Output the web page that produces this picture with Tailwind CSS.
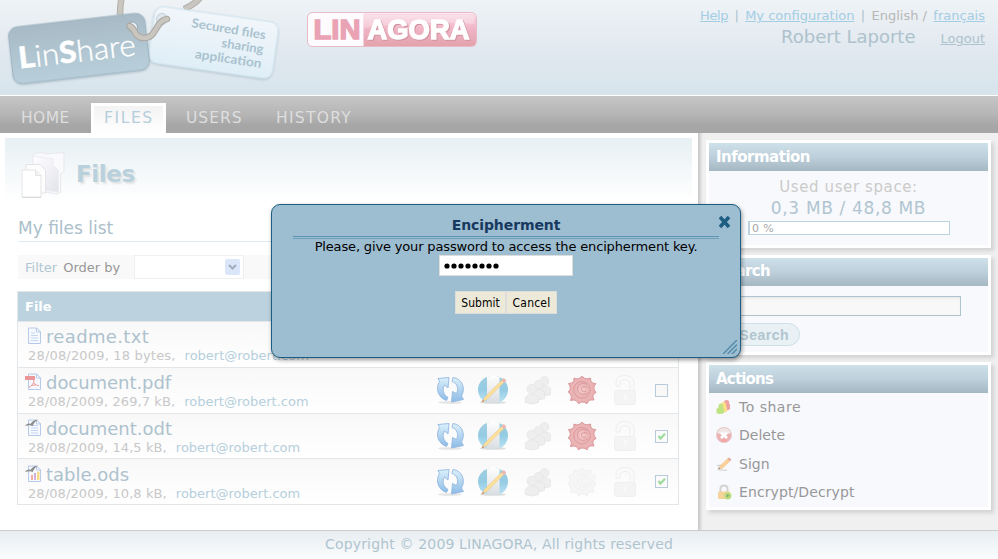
<!DOCTYPE html>
<html lang="en">
<head>
<meta charset="utf-8">
<title>LinShare</title>
<script src="https://cdn.jsdelivr.net/npm/@tailwindcss/browser@4"></script>
</head>
<body class="w-[998px] h-[559px] overflow-hidden bg-white font-['Verdana','DejaVu_Sans',sans-serif] text-[13px] whitespace-nowrap">
<svg width="0" height="0" class="absolute">
  <defs>
    <linearGradient id="gBlue" x1="0" y1="0" x2="0" y2="1"><stop offset="0" stop-color="#dcf1fb"/><stop offset="1" stop-color="#8dbbe6"/></linearGradient>
    <linearGradient id="gGlobe" x1="0" y1="0" x2="0" y2="1"><stop offset="0" stop-color="#a5cfe0"/><stop offset=".5" stop-color="#93cbe3"/><stop offset="1" stop-color="#b9e2f2"/></linearGradient>
    <linearGradient id="gBand" x1="0" y1="0" x2="0" y2="1"><stop offset="0" stop-color="#fdfdfd"/><stop offset="1" stop-color="#dcdfe2"/></linearGradient>
    <radialGradient id="gSeal"><stop offset="0" stop-color="#f6cdcd"/><stop offset="1" stop-color="#e6acae"/></radialGradient>
    <symbol id="refresh" viewBox="0 0 30 30">
      <ellipse cx="15" cy="27.500" rx="12" ry="1.300" fill="#e4e4e4"/>
      <path d="M11.500 25.500C3.500 23 0 14 4.500 6.500L3 3.500L14 2.500L13 13L9.500 10C7 14 8 19.500 13 22.500Z" fill="url(#gBlue)" stroke="#94b8e0" stroke-width=".9"/>
      <path d="M18 2.500C27 3.500 31 13 26.500 21L28.500 24.500L16.500 27L17.500 16.500L21.500 18.500C24 13 22 8 17 6.500Z" fill="url(#gBlue)" stroke="#94b8e0" stroke-width=".9"/>
    </symbol>
    <symbol id="globe" viewBox="0 0 32 30">
      <ellipse cx="16" cy="27.500" rx="13" ry="1.300" fill="#ddd"/>
      <path d="M16 1C7 1 1 7 1 14.500C1 20 4 25 9 27.200L23 27.200C28 25 31 20 31 14.500C31 7 25 1 16 1Z" fill="url(#gGlobe)"/>
      <path d="M10 2Q16 -.5 22.500 2.300V27H10Z" fill="url(#gBand)"/>
      <path d="M5.500 26.500L7.500 22.500L26.500 3.800L28.500 5.800L9.500 24.800Z" fill="#fde09a" stroke="#e8c389" stroke-width=".6"/>
      <path d="M24.500 5.500L27 8L29 6Q28.500 3 26.500 3.200Z" fill="#eab7b3"/>
      <path d="M4 27.500L6 24.700L7.500 26.200Z" fill="#c98f70"/>
    </symbol>
    <symbol id="people" viewBox="0 0 28 30">
      <g fill="#eeeeee" stroke="#e4e4e4" stroke-width=".7">
        <path d="M15 13.500Q20 8.500 26.500 13V19.500Q20 22.500 15 19.500Z"/><circle cx="20.500" cy="6" r="4.400"/>
        <path d="M9 17.500Q14 12 20.500 17V23.500Q14 26.500 9 23.500Z"/><circle cx="14.500" cy="9.800" r="4.400"/>
        <path d="M1.300 22Q8 15.500 14.500 22V27.500Q8 30.500 1.300 27.500Z"/><circle cx="7.700" cy="14" r="4.700"/>
      </g>
    </symbol>
    <symbol id="sealshape" viewBox="0 0 30 30">
      <path d="M15 1.200Q17 3.500 19 3.800Q21 4 23.500 3Q23.500 6 24.500 7.300Q26 8.500 28.800 8.500Q26.800 11 26.800 13Q27 15 29 17.500Q26.500 18.500 26 20.500Q25.800 22.500 27 25Q24 24.500 22.300 25.500Q21 26.500 20 28.800Q18 27 15.500 27Q13.500 27 11.500 28.800Q10.500 26.500 9 25.500Q7 24.500 3.500 25.500Q4.800 22.500 4 20.500Q3.500 18.500 1.200 17Q3.300 15 3.300 13Q3.200 11 1.500 8.500Q4.500 8.500 6 7.300Q7 6 7 3Q9 4.200 11 3.800Q13 3.500 15 1.200Z" stroke-linejoin="round" stroke-width="1"/>
      <circle cx="15" cy="14.800" r="8.500" stroke-width=".9"/>
      <path d="M20 9.500C15 6.500 10 10 10.500 14.500C11 19.500 17 21 21 17.500M20.500 12.500C17 10.500 14 12 14.500 14.800C15 16.800 17.500 17 19 16" fill="none" stroke-width="1"/>
    </symbol>
    <symbol id="lock" viewBox="0 0 24 32">
      <path d="M3 12V8.500C3 4.500 6.500 1.500 12 1.500C17.500 1.500 21 4.500 21 9V16.500H17V9.500C17 7 15 5.500 12 5.500C9 5.500 7 7 7 9V12Z" fill="#fafafa" stroke="#eeeeee"/>
      <rect x="1.500" y="16.500" width="21" height="14" rx="2" fill="#f4f4f4" stroke="#f0f0f0"/>
      <path d="M12 20a1.800 1.800 0 0 1 1 3.300v3h-2v-3a1.800 1.800 0 0 1 1-3.300" fill="#f8f8f8"/>
    </symbol>
    <symbol id="page" viewBox="0 0 17 18">
      <path d="M3.500 1H11.500L15.500 5V16.500H3.500Z" fill="#f5f9ff" stroke="#b7cae9"/>
      <path d="M11.500 1V5H15.500Z" fill="#fff" stroke="#b7cae9"/>
    </symbol>
    <symbol id="gull" viewBox="0 0 17 18">
      <path d="M0 7C2 4.500 4 4 5.500 5C7 2.500 9 .8 13 .5C10 2.500 8.800 4 7.800 7C5.500 6 3 6.200 0 7Z" fill="#8d8d8d"/>
    </symbol>
  </defs>
</svg>

<div class="flex flex-col h-[559px]">
  <header class="relative h-24 shrink-0 flex justify-between border-b border-white bg-linear-to-b from-[#eff3f6] via-[#e2e9f0] to-[#d7e4ec]">
    <svg width="490" height="95" viewBox="0 0 490 95">
      <defs>
        <linearGradient id="tag1" x1="0" y1="0" x2="0" y2="1"><stop offset="0" stop-color="#a7bac5"/><stop offset="1" stop-color="#b8cfdb"/></linearGradient>
        <linearGradient id="tag2" x1="0" y1="0" x2="0" y2="1"><stop offset="0" stop-color="#f1f6fa"/><stop offset="1" stop-color="#dfeef7"/></linearGradient>
        <linearGradient id="pink" x1="0" y1="0" x2="0" y2="1"><stop offset="0" stop-color="#f9d9e5"/><stop offset=".5" stop-color="#efb3c4"/><stop offset="1" stop-color="#e3a3ad"/></linearGradient>
        <filter id="sh" x="-10%" y="-20%" width="120%" height="150%"><feDropShadow dx="0" dy="1" stdDeviation="1.200" flood-color="#6f8796" flood-opacity=".4"/></filter>
      </defs>
      <path d="M120 15Q120 6 121.500 -2M184 9Q194 5 200 -2" fill="none" stroke="#b3afaa" stroke-width="6.500"/>
      <path d="M120 15Q120 6 121.500 -2M184 9Q194 5 200 -2" fill="none" stroke="#c9c5bf" stroke-width="4.500"/>
      <g transform="rotate(8 213.500 42.500)" filter="url(#sh)"><rect x="151" y="14" width="125" height="57" rx="9" fill="url(#tag2)" stroke="#cfe4ef"/></g>
      <g transform="rotate(-6.500 79 48.500)" filter="url(#sh)"><rect x="10.500" y="20" width="137" height="57" rx="9" fill="url(#tag1)" stroke="#9eb5c2"/></g>
      <circle cx="132.500" cy="27" r="5" fill="#e6edf1" stroke="#93a8b4"/>
      <circle cx="162" cy="19" r="5.500" fill="#dfe7ec" stroke="#c2d3dd"/>
      <path d="M129.500 26C136 29 134 38 144 38C157 38 155 21 167 19" fill="none" stroke="#aaa6a1" stroke-width="6.500" stroke-linecap="round"/>
      <path d="M129.500 26C136 29 134 38 144 38C157 38 155 21 167 19" fill="none" stroke="#c9c5bf" stroke-width="4.500" stroke-linecap="round"/>
      <g transform="translate(19.500 68.500) rotate(-6.500)" fill="#fff" font-family="Lato, sans-serif" font-size="30" font-weight="300">
        <text textLength="118" lengthAdjust="spacingAndGlyphs" stroke="#fff" stroke-width=".35"><tspan font-weight="900">L</tspan>in<tspan font-weight="900">S</tspan>hare</text>
      </g>
      <g fill="#a9c2cf" font-family="Lato, sans-serif" font-weight="700" font-size="12.500">
        <text transform="translate(191 27) rotate(9.500)" textLength="75" lengthAdjust="spacingAndGlyphs">Secured files</text>
        <text transform="translate(221 47) rotate(9)" textLength="42.500" lengthAdjust="spacingAndGlyphs">sharing</text>
        <text transform="translate(194.500 58) rotate(8.500)" textLength="67" lengthAdjust="spacingAndGlyphs">application</text>
      </g>
      <rect x="307.500" y="12.500" width="169" height="34" rx="5" fill="#fdfbfd" stroke="#e6bac6"/>
      <path d="M363.500 13.500H471.500Q476 13.500 476 18V41.500Q476 46 471.500 46H363.500Z" fill="url(#pink)"/>
      <path d="M364 15H470Q474 15 474 19V24Q420 20 364 28Z" fill="#fff" fill-opacity=".25"/>
      <g font-family="'Liberation Sans', sans-serif" font-weight="700" font-size="28" stroke-width="1.400">
        <text x="313.500" y="39" textLength="47" lengthAdjust="spacingAndGlyphs" fill="#eaa3b5" stroke="#eaa3b5">LIN</text>
        <text x="367.500" y="39" textLength="102" lengthAdjust="spacingAndGlyphs" fill="#fff" stroke="#fff" class="[filter:drop-shadow(1px_1px_0.5px_#cf93a0)]">AGORA</text>
      </g>
    </svg>
    <div class="w-[300px] pr-[13px] pt-2 text-[#adc2cc]">
      <div class="flex justify-between h-4 leading-4 ml-[2px]">
        <a class="text-[#a3cde4] underline tracking-[-0.4px]">Help</a><span>|</span><a class="text-[#a3cde4] underline">My configuration</a><span>|</span><span class="text-[#b7b7b7]">English&nbsp;/</span><a class="text-[#a3cde4] underline">français</a>
      </div>
      <div class="flex justify-end gap-[25px] h-[26px] leading-[26px]"><span class="text-[18px]">Robert Laporte</span><a class="underline leading-[29px]">Logout</a></div>
    </div>
  </header>

  <nav class="h-[37px] shrink-0 flex items-end text-[15.5px] text-[#dedede] bg-linear-to-b from-[#c6c6c6] from-0% via-[#b5b5b5] via-50% to-[#a6a6a6] to-80%">
    <a class="w-[91px] pl-[21px] h-[30px] leading-[30px] tracking-[0.4px]">HOME</a>
    <a class="w-[75px] h-[30px] pl-[10px] leading-6 border-[3px] border-b-0 border-white bg-linear-to-b from-[#f3f3f3] to-white text-[#b5cedb] tracking-[1.6px]">FILES</a>
    <a class="pl-5 w-[110px] h-[30px] leading-[30px] tracking-[1px]">USERS</a>
    <a class="h-[30px] leading-[30px] tracking-[1.3px]">HISTORY</a>
  </nav>

  <div class="h-[397px] shrink-0 flex">
    <main class="w-[698px] bg-white pt-[5px] pl-[5px]">
      <div class="w-[687px] h-[70px] flex bg-linear-to-b from-[#e7f0f3] to-white to-90%">
        <svg width="46" height="50" viewBox="0 0 46 50" class="ml-[15px] mt-[12px]">
          <defs><linearGradient id="fold" x1="0" y1="0" x2="1" y2="1"><stop offset="0" stop-color="#fff"/><stop offset=".5" stop-color="#f1f1f7"/><stop offset="1" stop-color="#e2e2ea"/></linearGradient></defs>
          <path d="M13 3.500L23 2.500L25 4L44 2.500V21L40.500 24V42.500L37 44L13 40Z" fill="#fafafc" stroke="#e8e8ee"/>
          <path d="M13 6L33 9V16L38.500 20V42L13 39Z" fill="url(#fold)" stroke="#ececf2"/>
          <path d="M6 14.500H20L25.500 20V43H6Z" fill="#fdfdfd" stroke="#e4e4e7"/>
          <path d="M2 20H15.500L21 25.500V47H2Z" fill="#fff" stroke="#e4e4e7"/><path d="M15.500 20V25.500H21" fill="#f3f3f5" stroke="#e4e4e7"/><path d="M2 47.500H21" stroke="#d9d9db"/>
        </svg>
        <h1 class="ml-[10px] mt-[20px] h-8 leading-8 text-[23px] tracking-[-0.4px] font-bold text-[#b9d1dd] [text-shadow:2px_2px_2px_#e2e2e2]">Files</h1>
      </div>
      <div class="ml-[13px] w-[661px]">
        <h2 class="mt-[8px] h-[26px] leading-[24px] text-[17px] text-[#abc0cb] border-b border-[#dcebf2]">My files list</h2>
        <div class="mt-[13px] h-6 flex items-center bg-[#f9f9f9] pl-[7px]">
          <span class="text-[#b0c7d3] pt-px">Filter</span><span class="ml-[6px] pt-px text-[#979797]">Order by</span>
          <div class="ml-auto mr-[435px] w-[110px] h-6 shrink-0 border border-[#efefef] bg-white flex justify-end items-center pr-[3px]">
            <svg width="15" height="16"><rect width="15" height="16" rx="2" fill="#dbe6fb"/><path d="M4 6L7.500 9.500L11 6" fill="none" stroke="#a5adbb" stroke-width="2.200"/></svg>
          </div>
        </div>
      </div>
      <div class="ml-3 mt-3 w-[662px] border border-[#e3e6e8]">
        <div class="h-[29px] leading-[29px] pl-[7px] bg-[#bcd2de] text-white font-bold">File</div>
        <div class="h-[46px] border-t border-[#e3e6e8] bg-linear-to-b from-[#f8f8f8] to-white pl-[7px] pt-[5px]">
          <div class="flex h-5 leading-5"><svg width="17" height="18"><use href="#page"/><path d="M6 6H10M6 8.500H13M6 11H13M6 13.500H13" stroke="#c5d8f0"/></svg><span class="ml-[4px] text-[18px] tracking-[0.35px] text-[#adc2ce]">readme.txt</span></div>
          <div class="ml-[3px] mt-[2px] h-[14px] leading-[14px] flex gap-[9px] text-[#c8c8c8]"><span class="tracking-[0.18px]">28/08/2009, 18 bytes,</span><span class="text-[#b6cfdc]">robert@robert.com</span></div>
        </div>
        <div class="h-[46px] border-t border-[#e3e6e8] bg-linear-to-b from-[#f8f8f8] to-white pl-[7px] flex">
          <div class="w-[408px] pt-[5px]">
            <div class="flex h-5 leading-5"><svg width="17" height="18"><use href="#page"/><path d="M0 3H10V7H0Z" fill="#eb9797"/><path d="M9 7C9 11 6 13 4 14.500M9 9.500C10 12 12 12.500 14 12.500M6 12.500L11 11.800" fill="none" stroke="#ec9b9b"/></svg><span class="ml-[4px] text-[18px] tracking-[-0.05px] text-[#adc2ce]">document.pdf</span></div>
            <div class="ml-[3px] mt-[2px] h-[14px] leading-[14px] flex gap-[9px] text-[#c8c8c8]"><span class="tracking-[0.1px]">28/08/2009, 269,7 kB,</span><span class="text-[#b6cfdc]">robert@robert.com</span></div>
          </div>
          <div class="flex items-center pl-[2px] h-[44px]">
            <svg width="30" height="30"><use href="#refresh"/></svg><svg width="32" height="30" class="ml-3"><use href="#globe"/></svg><svg width="28" height="30" class="ml-[15px]"><use href="#people"/></svg><svg width="30" height="30" class="ml-[15px]" fill="url(#gSeal)" stroke="#dc999d"><use href="#sealshape"/></svg><svg width="24" height="32" class="ml-4"><use href="#lock"/></svg>
            <span class="ml-[18px] size-[13px] border border-[#b9cbda] bg-[#f8f8f6]"></span>
          </div>
        </div>
        <div class="h-[45px] border-t border-[#e3e6e8] bg-linear-to-b from-[#f8f8f8] to-white pl-[7px] flex">
          <div class="w-[408px] pt-[5px]">
            <div class="flex h-5 leading-5"><svg width="17" height="18"><use href="#page"/><path d="M6 6.500H13M6 9H13M6 11.500H13M6 14H13" stroke="#c5d8f0"/><use href="#gull"/></svg><span class="ml-[4px] text-[18px] text-[#adc2ce]">document.odt</span></div>
            <div class="ml-[3px] mt-[2px] h-[14px] leading-[14px] flex gap-[9px] text-[#c8c8c8]"><span class="tracking-[0.1px]">28/08/2009, 14,5 kB,</span><span class="text-[#b6cfdc]">robert@robert.com</span></div>
          </div>
          <div class="flex items-center pl-[2px] h-[44px]">
            <svg width="30" height="30"><use href="#refresh"/></svg><svg width="32" height="30" class="ml-3"><use href="#globe"/></svg><svg width="28" height="30" class="ml-[15px]"><use href="#people"/></svg><svg width="30" height="30" class="ml-[15px]" fill="url(#gSeal)" stroke="#dc999d"><use href="#sealshape"/></svg><svg width="24" height="32" class="ml-4"><use href="#lock"/></svg>
            <span class="ml-[18px] size-[13px] border border-[#b9cbda] bg-[#fbfbfb]"><svg width="11" height="11"><path d="M2.500 5L4.500 7.500L9 2.800" fill="none" stroke="#9cdb9c" stroke-width="2.200"/></svg></span>
          </div>
        </div>
        <div class="h-[46px] border-t border-[#e3e6e8] bg-linear-to-b from-[#f8f8f8] to-white pl-[7px] flex">
          <div class="w-[408px] pt-[6px]">
            <div class="flex h-5 leading-5"><svg width="17" height="18"><use href="#page"/><path d="M6 10H8V15H6Z" fill="#f0b0a4"/><path d="M9 8H11V15H9Z" fill="#d3b0dd"/><path d="M12 6.500H14.500V15H12Z" fill="#f7dd85"/><use href="#gull"/></svg><span class="ml-[4px] text-[18px] text-[#adc2ce]">table.ods</span></div>
            <div class="ml-[3px] mt-[2px] h-[14px] leading-[14px] flex gap-[9px] text-[#c8c8c8]"><span class="tracking-[0.1px]">28/08/2009, 10,8 kB,</span><span class="text-[#b6cfdc]">robert@robert.com</span></div>
          </div>
          <div class="flex items-center pl-[2px] h-[45px]">
            <svg width="30" height="30"><use href="#refresh"/></svg><svg width="32" height="30" class="ml-3"><use href="#globe"/></svg><svg width="28" height="30" class="ml-[15px]"><use href="#people"/></svg><svg width="30" height="30" class="ml-[15px]" fill="#f6f6f6" stroke="#f0f0f0"><use href="#sealshape"/></svg><svg width="24" height="32" class="ml-4"><use href="#lock"/></svg>
            <span class="ml-[18px] size-[13px] border border-[#b9cbda] bg-[#fbfbfb]"><svg width="11" height="11"><path d="M2.500 5L4.500 7.500L9 2.800" fill="none" stroke="#9cdb9c" stroke-width="2.200"/></svg></span>
          </div>
        </div>
      </div>
    </main>

    <aside class="w-[300px] pt-[7px] pl-2 flex flex-col gap-[7px] bg-linear-to-r from-[#c6c6c6] to-[#f0f0f0] to-[5px]">
      <section class="w-[285px] h-[108px] p-[3px] bg-white shadow-[3px_3px_4px_#d2d2d2]">
        <div class="h-full bg-[#f8f9fc] text-center">
          <h3 class="h-7 leading-7 pl-[7px] text-left text-[15px] tracking-[-0.5px] font-bold text-white bg-linear-to-b from-[#cee0e9] via-[#bdd0db] to-[#a5b7c1]">Information</h3>
          <div class="mt-[6px] h-5 leading-5 text-[15px] tracking-[0.6px] text-[#cbcbcb]">Used user space:</div>
          <div class="h-[22px] leading-[22px] text-[17px] tracking-[0.65px] text-[#b0c5d1]">0,3 MB / 48,8 MB</div>
          <div class="mt-[2px] ml-[39px] w-[202px] h-[14px] leading-[13px] border border-l-2 border-[#bcd2de] bg-white text-left pl-[2px] text-[11px] tracking-[0.4px] text-[#a8a8a8]">0 %</div>
        </div>
      </section>
      <section class="w-[285px] h-[100px] p-[3px] bg-white shadow-[3px_3px_4px_#d2d2d2]">
        <div class="h-full bg-[#f8f9fc]">
          <h3 class="h-7 leading-[26px] pl-[7px] text-[15px] tracking-[-0.7px] font-bold text-white bg-linear-to-b from-[#cee0e9] via-[#bdd0db] to-[#a5b7c1]">Search</h3>
          <div class="mt-[10px] ml-[7px] w-[245px] h-5 border border-[#adc3ce] bg-[#f8f8f8] shadow-[inset_0_2px_2px_#ececec]"></div>
          <div class="mt-[7px] ml-[7px] w-[84px] h-[23px] leading-[22px] pr-[10px] text-right rounded-full border border-[#cde0e8] bg-[#e9f1f4] font-['Liberation_Sans',sans-serif] font-bold text-[14px] tracking-[0.5px] text-[#b0c5d0]">Search</div>
        </div>
      </section>
      <section class="w-[285px] h-[148px] p-[3px] bg-white shadow-[3px_3px_4px_#d2d2d2]">
        <div class="h-full bg-[#f8f9fc] text-[14px] text-[#979799]">
          <h3 class="h-7 leading-7 pl-[7px] text-[15px] tracking-[-0.8px] font-bold text-white bg-linear-to-b from-[#cee0e9] via-[#bdd0db] to-[#a5b7c1]">Actions</h3>
          <div class="flex items-center gap-[7px] pl-[7px] h-7"><svg width="16" height="16" viewBox="0 0 16 16"><path d="M8 8V3Q8 1 10.500 1Q13.500 1 13 4L14 6V10Q12 12 9 11Z" fill="#eda1a1"/><path d="M5 10V5Q6 2.500 8 3Q10.500 3.500 10 6.500L11 9V12.500Q8 14 5 13Z" fill="#fadf85"/><path d="M.5 14V10L2.500 8.500Q2 4.500 5 4.500Q8 5 7 8.500L8 10.500V14Q4 16 .5 14Z" fill="#bfe283"/></svg><span class="tracking-[0.5px]">To share</span></div>
          <div class="flex items-center gap-[7px] pl-[7px] h-7"><svg width="16" height="16" viewBox="0 0 16 16"><circle cx="8" cy="8" r="7.700" fill="#eab3b2" stroke="#ddd0d0" stroke-width=".6"/><path d="M1 6Q3 1 8 1Q13 1 15 6Q8 9 1 6Z" fill="#f0e6e6"/><path d="M5 5.500L11 11M11 5.500L5 11" stroke="#fff" stroke-width="2.700"/><path d="M5 14Q8 10 11 14Q8 16 5 14Z" fill="#f7a3a3"/></svg><span>Delete</span></div>
          <div class="flex items-center gap-[7px] pl-[7px] h-[29px]"><svg width="16" height="16" viewBox="0 0 16 16"><path d="M1 9.500H6M3 14.200H11" stroke="#d7d7d7" stroke-width="1.300"/><path d="M2.500 13L4 10L12 2.500L14.500 4.500L6 12.500Z" fill="#fbd197" stroke="#edbd8b" stroke-width=".6"/><path d="M11.500 3L13 1.500L15.500 3.500L14 5Z" fill="#eaa5a5"/><path d="M1.500 14L3 11.300L4.500 12.600Z" fill="#999"/></svg><span class="pt-px">Sign</span></div>
          <div class="flex items-center gap-[7px] pl-[7px] h-7"><svg width="16" height="16" viewBox="0 0 16 16"><path d="M4.500 8V4.500Q4.500 1.500 8 1.500Q11.500 1.500 11.500 4.500V8" fill="none" stroke="#d3d3d3" stroke-width="2"/><rect x="2" y="7.500" width="12" height="7.500" rx="1" fill="#f4d49a"/><circle cx="11.800" cy="11.800" r="3.600" fill="#b9dd7c"/><path d="M10.800 10L13.300 11.800L10.800 13.600Z" fill="#7f9e82"/></svg><span class="tracking-[0.1px]">Encrypt/Decrypt</span></div>
        </div>
      </section>
    </aside>
  </div>

  <footer class="h-[29px] shrink-0 border-t border-[#c9cdd0] bg-linear-to-b from-[#e7edf1] to-[#fbfcfd] text-center leading-[27px] text-[14px] tracking-[0.16px] text-[#afc4cf]">Copyright © 2009 LINAGORA, All rights reserved</footer>
</div>

<div class="absolute left-[271px] top-[204px] w-[470px] h-[154px] rounded-[9px] border border-[#1c5e83] bg-[#9dbdd1] shadow-[1px_2px_4px_#00000066] flex flex-col items-center text-black">
  <div class="mt-[10px] h-[22px] leading-[21px] w-[426px] text-center text-[14px] tracking-[-0.1px] font-bold text-[#17395f] border-b border-[#5e94b3]">Encipherment</div>
  <div class="mt-px w-[426px] h-px bg-[#6f9fbb]"></div>
  <div class="h-4 leading-4 tracking-[-0.155px]">Please, give your password to access the encipherment key.</div>
  <div class="w-[134px] h-[21px] border border-[#ddd] bg-white px-1 flex items-center"><svg width="58" height="6" fill="#000"><circle cx="3" cy="3" r="2.600"/><circle cx="10" cy="3" r="2.600"/><circle cx="17" cy="3" r="2.600"/><circle cx="24" cy="3" r="2.600"/><circle cx="31" cy="3" r="2.600"/><circle cx="38" cy="3" r="2.600"/><circle cx="45" cy="3" r="2.600"/><circle cx="52" cy="3" r="2.600"/></svg></div>
  <div class="mt-[15px] flex text-[12px] font-['Tahoma','DejaVu_Sans_Condensed','DejaVu_Sans',sans-serif]">
    <button class="w-[51px] h-[23px] border border-[#ddd] bg-[#ece9d8]">Submit</button><button class="w-[51px] h-[23px] border border-[#ddd] bg-[#ece9d8] tracking-[0.2px]">Cancel</button>
  </div>
  <svg class="absolute right-[8px] top-[10px]" width="15" height="14"><path d="M3 2L12 12M12 2L3 12" stroke="#1d5e82" stroke-width="3.500"/></svg>
  <svg class="absolute right-[3px] bottom-[3px]" width="14" height="14"><path d="M0 14L14 0M4.500 14L14 4.500M9 14L14 9" stroke="#558cab" stroke-width="1.500"/></svg>
</div>
</body>
</html>
